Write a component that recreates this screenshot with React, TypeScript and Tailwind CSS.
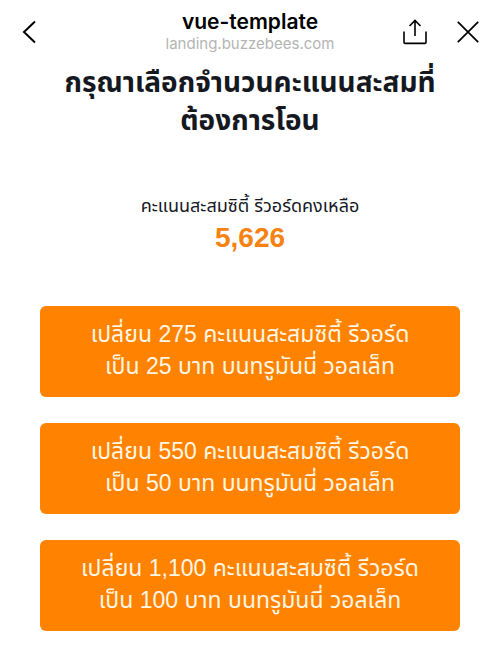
const offers = [
  { points: "275", baht: "25" },
  { points: "550", baht: "50" },
  { points: "1,100", baht: "100" },
];

function BackIcon() {
  return (
    <svg viewBox="0 0 24 24" className="size-6" fill="none" stroke="currentColor" strokeWidth="2" aria-hidden="true">
      <path d="M15 1.5 4 12l11 10.5" />
    </svg>
  );
}

function ShareIcon() {
  return (
    <svg viewBox="0 0 26 26" className="size-[26px]" fill="none" stroke="currentColor" strokeWidth="1.6" aria-hidden="true">
      <path d="M2 12.5V23.2a1.2 1.2 0 0 0 1.2 1.2h19.6a1.2 1.2 0 0 0 1.2-1.2V12.5" />
      <path d="M13 17V1.5M7.5 7 13 1.5 18.5 7" />
    </svg>
  );
}

function CloseIcon() {
  return (
    <svg viewBox="0 0 24 24" className="size-6" fill="none" stroke="currentColor" strokeWidth="1.7" aria-hidden="true">
      <path d="M1.8 1.8 22.2 22.2M22.2 1.8 1.8 22.2" />
    </svg>
  );
}

export default function App() {
  return (
    <div className="min-h-screen bg-white pb-4 font-['Liberation_Sans','Noto_Sans_Thai','Noto_Sans',sans-serif] text-[#15181f]">
      <header className="grid h-16 grid-cols-[1fr_auto_1fr] items-center px-5 font-['Inter',sans-serif] text-black">
        <button type="button" aria-label="Back" className="justify-self-start">
          <BackIcon />
        </button>
        <div className="text-center">
          <h1 className="text-[21px] leading-6 font-semibold">vue-template</h1>
          <p className="text-[15px] leading-5 text-[#b4b4b4]">landing.buzzebees.com</p>
        </div>
        <div className="flex items-center gap-7 justify-self-end">
          <button type="button" aria-label="Share">
            <ShareIcon />
          </button>
          <button type="button" aria-label="Close">
            <CloseIcon />
          </button>
        </div>
      </header>

      <main className="px-10 text-center">
        <h2 className="text-[28px] leading-[38px] font-bold">
          กรุณาเลือกจำนวนคะแนนสะสมที่
          <br />
          ต้องการโอน
        </h2>
        <p className="mt-[50px] text-lg leading-8">คะแนนสะสมซิตี้ รีวอร์ดคงเหลือ</p>
        <p className="text-[28px] leading-8 font-bold text-[#f58212]">5,626</p>

        <div className="mt-[52px] flex flex-col gap-[26px]">
          {offers.map((offer) => (
            <button
              key={offer.points}
              type="button"
              className="rounded-md bg-[#ff8200] pt-3 pb-[15px] text-[23px] leading-8 text-[#fff6e4]"
            >
              เปลี่ยน {offer.points} คะแนนสะสมซิตี้ รีวอร์ด
              <br />
              เป็น {offer.baht} บาท บนทรูมันนี่ วอลเล็ท
            </button>
          ))}
        </div>
      </main>
    </div>
  );
}
